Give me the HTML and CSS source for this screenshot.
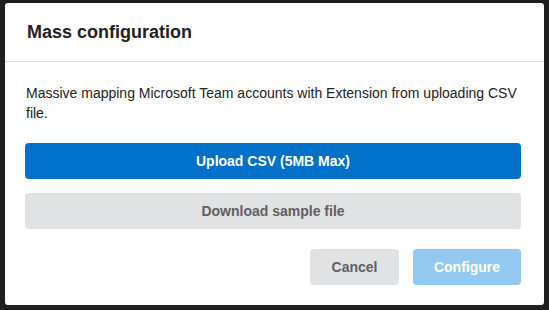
FILE: index.html
```html
<!DOCTYPE html>
<html lang="en">
<head>
    <meta charset="UTF-8">
    <meta name="viewport" content="width=device-width, initial-scale=1.0">
    <title>Mass configuration</title>
    <link rel="stylesheet" href="styles.css">
</head>
<body>
    <div class="modal">
        <div class="modal-header">
            <h2>Mass configuration</h2>
        </div>
        <div class="modal-body">
            <p class="description">Massive mapping Microsoft Team accounts with Extension from uploading CSV file.</p>
            <button type="button" class="btn btn-primary btn-block">Upload CSV (5MB Max)</button>
            <button type="button" class="btn btn-light btn-block">Download sample file</button>
            <div class="modal-footer">
                <button type="button" class="btn btn-light btn-cancel">Cancel</button>
                <button type="button" class="btn btn-primary btn-configure" disabled>Configure</button>
            </div>
        </div>
    </div>
</body>
</html>
```

FILE: styles.css
```css
* {
    margin: 0;
    padding: 0;
    box-sizing: border-box;
}

body {
    font-family: "Liberation Sans", Arial, sans-serif;
    background: #1f1f1f;
    padding: 3px 5px;
    height: 310px;
    overflow: hidden;
}

.modal {
    background: white;
    width: 539px;
    border-radius: 3px;
}

.modal-header {
    padding: 17px 22px;
    border-bottom: 1px solid #dcdcdc;
}

.modal-header h2 {
    font-size: 18px;
    line-height: 24px;
    font-weight: 700;
    color: #222;
}

.modal-body {
    padding: 21px 23px 20px 20px;
}

.description {
    font-size: 14px;
    line-height: 20px;
    color: #222;
    padding-left: 1px;
    margin-bottom: 20px;
}

.btn {
    height: 36px;
    border: none;
    border-radius: 4px;
    font-family: inherit;
    font-size: 14px;
    font-weight: 700;
    cursor: pointer;
}

.btn-block {
    display: block;
    width: 100%;
    margin-bottom: 14px;
}

.btn-primary {
    background: #0070c9;
    color: white;
}

.btn-primary:disabled {
    background: #93c9f0;
    cursor: default;
}

.btn-light {
    background: #e1e2e4;
    color: #606060;
}

.modal-footer {
    display: flex;
    justify-content: flex-end;
    gap: 14px;
    margin-top: 20px;
}

.btn-cancel {
    width: 89px;
}

.btn-configure {
    width: 108px;
}
```
